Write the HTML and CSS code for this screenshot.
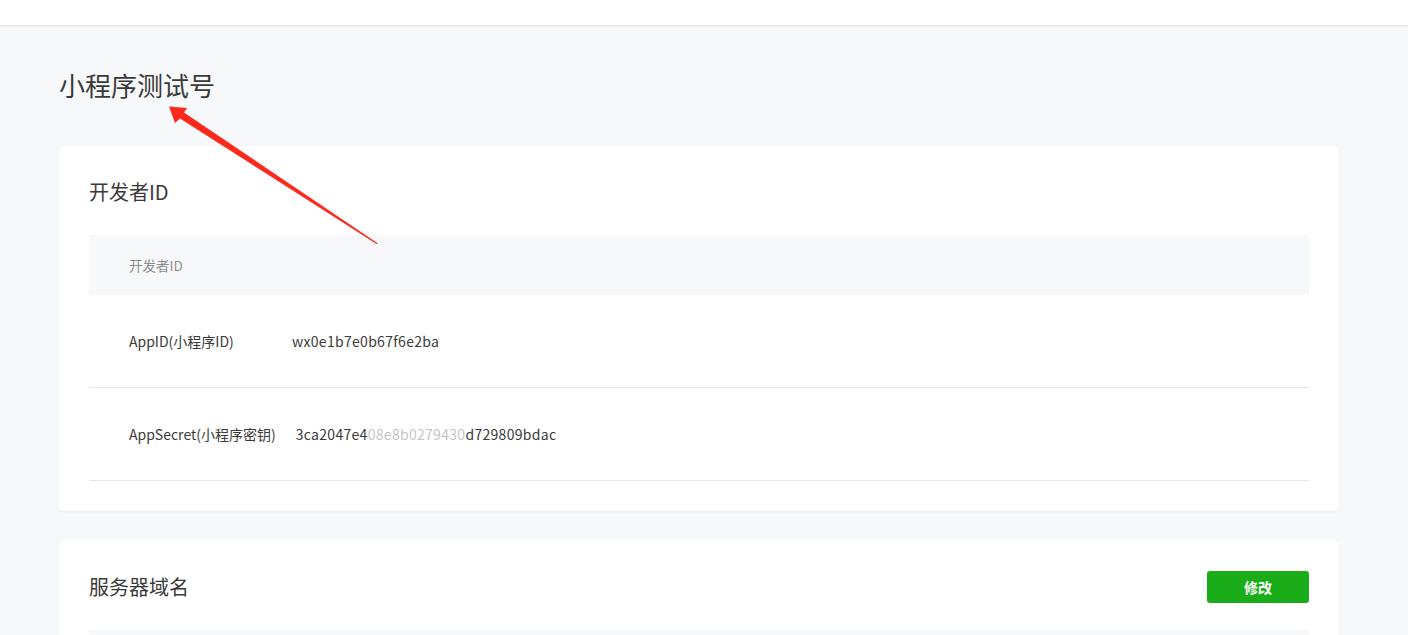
FILE: index.html
```html
<!DOCTYPE html>
<html lang="zh-CN">
<head>
<meta charset="utf-8">
<title>小程序测试号</title>
<link rel="stylesheet" href="styles.css">
</head>
<body>
<header class="topbar"></header>
<main class="main">
  <h1 class="page-title">小程序测试号</h1>

  <section class="card">
    <div class="card-head">
      <h2 class="card-title">开发者ID</h2>
    </div>
    <div class="table">
      <div class="thead">开发者ID</div>
      <div class="row">
        <span class="label">AppID(小程序ID)</span>
        <span class="value">wx0e1b7e0b67f6e2ba</span>
      </div>
      <div class="row">
        <span class="label">AppSecret(小程序密钥)</span>
        <span class="value">3ca2047e4<span class="blur">08e8b0279430</span>d729809bdac</span>
      </div>
    </div>
  </section>

  <section class="card">
    <div class="card-head">
      <h2 class="card-title">服务器域名</h2>
      <button class="btn-green">修改</button>
    </div>
    <div class="table">
      <div class="thead"></div>
    </div>
  </section>
</main>

<svg class="arrow" width="400" height="260" viewBox="0 0 400 260">
  <polygon points="169,106.5 187,108 184,112.5 378,243.5 376.5,244 180,118.5 175,123" fill="#fb2a1c"/>
</svg>
</body>
</html>
```

FILE: styles.css
```css
html, body {
  margin: 0;
  padding: 0;
}
body {
  background: #f7f8fa;
  font-family: "Noto Sans CJK SC", "Noto Sans", sans-serif;
  color: #353535;
  position: relative;
  min-height: 635px;
  overflow: hidden;
}
.topbar {
  height: 25px;
  background: #fff;
  border-bottom: 1px solid #e4e4e4;
  box-shadow: 0 1px 1px rgba(0, 0, 0, 0.04);
}
.main {
  width: 1280px;
  margin-left: 59px;
  padding-top: 41px;
}
.page-title {
  margin: 0;
  font-size: 26px;
  line-height: 36px;
  font-weight: 400;
  color: #3a3a3a;
}
.card {
  background: #fff;
  border-radius: 4px;
  box-shadow: 0 1px 2px rgba(0, 0, 0, 0.06);
  padding: 30px;
  margin-top: 43px;
}
.card + .card {
  margin-top: 30px;
}
.card-head {
  display: flex;
  align-items: center;
  justify-content: space-between;
  height: 32px;
  margin-bottom: 27px;
}
.card-title {
  margin: 0;
  font-size: 20px;
  font-weight: 400;
  line-height: 32px;
  color: #3a3a3a;
}
.btn-green {
  width: 102px;
  height: 32px;
  border: 0;
  border-radius: 3px;
  background: #1aad19;
  color: #fff;
  font-family: inherit;
  font-size: 14px;
  font-weight: 700;
  padding: 0;
}
.thead {
  height: 60px;
  background: #f7f8fa;
  display: flex;
  align-items: center;
  padding-left: 40px;
  font-size: 13.5px;
  color: #8d8d8d;
}
.row {
  height: 92px;
  border-bottom: 1px solid #e7e7eb;
  display: flex;
  align-items: center;
  padding-left: 40px;
  font-size: 14px;
  color: #3a3a3a;
}
.label {
  min-width: 143px;
  margin-right: 20px;
}
.value {
  color: #3a3a3a;
  letter-spacing: 0.3px;
}
.blur {
  opacity: 0.3;
}
.arrow {
  position: absolute;
  left: 0;
  top: 0;
}
```
